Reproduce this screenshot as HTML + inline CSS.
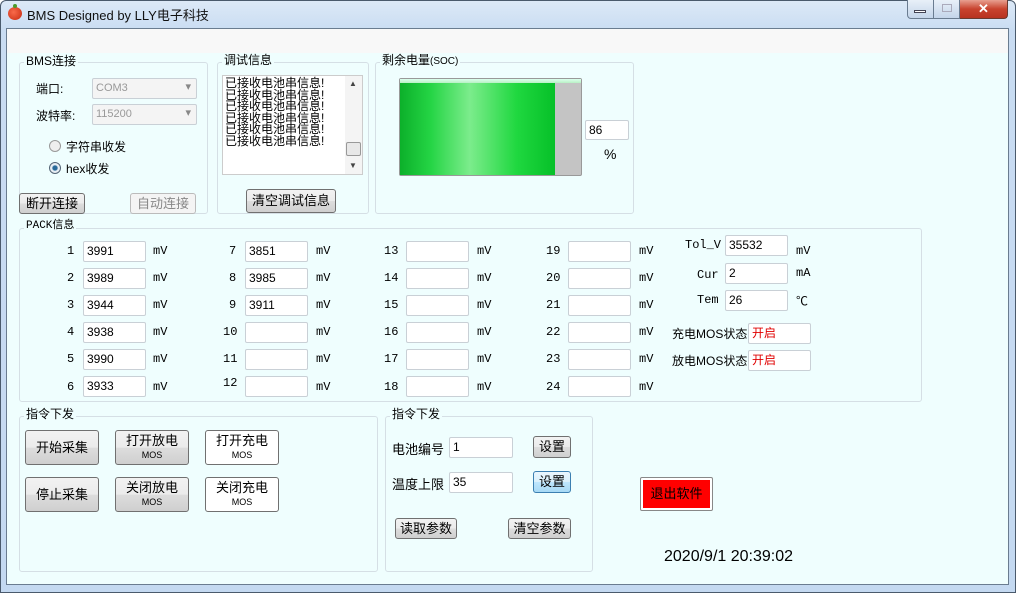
<!DOCTYPE html>
<html><head><meta charset="utf-8"><style>
*{margin:0;padding:0;box-sizing:border-box}
body{width:1018px;height:596px;overflow:hidden;background:#fff;font-family:"Liberation Sans","Noto Sans CJK SC",sans-serif;font-size:12px;color:#000;position:relative}
.a{position:absolute}
.frame{left:0;top:0;width:1016px;height:593px;background:linear-gradient(#dce9f7,#c9dcf2 30px,#c4d9f1);border:1px solid #4a5a6c;border-radius:6px 6px 0 0}
.client{left:6px;top:28px;width:1003px;height:557px;background:#effefe;border:1px solid #6a7c90}
.strip{left:7px;top:29px;width:1001px;height:24px;background:#f8f8f8}
.gb{position:absolute;border:1px solid #d5dfe5;border-radius:3px}
.gl{position:absolute;background:#effefe;padding:0 2px;font-size:12px;line-height:13px}
.tb{position:absolute;background:#fff;border:1px solid #c9d0d6;border-radius:2px;font-size:12px;padding:1px 3px;line-height:17px;height:21px}
.btn{position:absolute;border:1px solid #707070;border-radius:3px;background:linear-gradient(#f2f2f2,#ebebeb 50%,#dddddd 51%,#cfcfcf);text-align:center;font-size:13px}
.wb{background:#fff}
.lbl{position:absolute;font-size:12px}
.mv{position:absolute;font-size:12px;font-family:"Liberation Mono","Noto Sans CJK SC",monospace}
</style></head><body>
<div class="a frame"></div>
<div class="a" style="left:8px;top:7px;width:14px;height:13px;border-radius:50%;background:radial-gradient(circle at 40% 40%,#f86a4a,#c82a10)"></div>
<div class="a" style="left:13px;top:4px;width:4px;height:4px;background:#4a9a2a;border-radius:2px"></div>
<div class="a" style="left:27px;top:5px;font-size:13px;color:#111">BMS Designed by LLY电子科技</div>
<div class="a" style="left:907px;top:0;width:27px;height:19px;border:1px solid #6a7c90;border-top:0;border-radius:0 0 0 4px;background:linear-gradient(#e8f0f8,#c4d5ea)"></div>
<div class="a" style="left:914px;top:10px;width:12px;height:3px;background:#fff;border:1px solid #445"></div>
<div class="a" style="left:934px;top:0;width:26px;height:19px;border:1px solid #6a7c90;border-top:0;border-left:0;background:linear-gradient(#e8f0f8,#c4d5ea)"></div>
<div class="a" style="left:942px;top:4px;width:10px;height:8px;border:1px solid #aab"></div>
<div class="a" style="left:960px;top:0;width:48px;height:19px;border:1px solid #6a3a30;border-top:0;border-left:0;border-radius:0 0 4px 0;background:linear-gradient(#e8a090,#c8432e 50%,#b83220);color:#fff;font-weight:bold;text-align:center;font-size:13px;line-height:17px">✕</div>
<div class="a client"></div>
<div class="a strip"></div>

<div class="gb" style="left:19px;top:62px;width:189px;height:152px"></div>
<div class="gl" style="left:24px;top:55px">BMS连接</div>
<div class="lbl" style="left:36px;top:80px">端口:</div>
<div class="lbl" style="left:36px;top:107px">波特率:</div>
<div class="tb" style="left:92px;top:78px;width:105px;background:#f4f4f4;color:#999;font-size:11px">COM3<span style="position:absolute;right:5px;top:0;color:#888">▾</span></div>
<div class="tb" style="left:92px;top:104px;width:105px;background:#f4f4f4;color:#999;font-size:11px">115200<span style="position:absolute;right:5px;top:0;color:#888">▾</span></div>
<div class="a" style="left:49px;top:140px;width:12px;height:12px;border-radius:50%;border:1px solid #999;background:#eee"></div>
<div class="lbl" style="left:66px;top:138px">字符串收发</div>
<div class="a" style="left:49px;top:162px;width:12px;height:12px;border-radius:50%;border:1px solid #567;background:radial-gradient(#2a6a9a 30%,#e8eef4 45%)"></div>
<div class="lbl" style="left:66px;top:160px">hex收发</div>
<div class="btn" style="left:19px;top:193px;width:66px;height:21px;line-height:19px">断开连接</div>
<div class="btn" style="left:130px;top:193px;width:66px;height:21px;line-height:19px;color:#888;border-color:#bbb;background:#f4f4f4">自动连接</div>

<div class="gb" style="left:217px;top:62px;width:152px;height:152px"></div>
<div class="gl" style="left:222px;top:54px">调试信息</div>
<div class="a" style="left:222px;top:75px;width:141px;height:100px;background:#fff;border:1px solid #ccc;font-size:12px;line-height:11.5px;padding:2px 2px">已接收电池串信息!<br>已接收电池串信息!<br>已接收电池串信息!<br>已接收电池串信息!<br>已接收电池串信息!<br>已接收电池串信息!</div>
<div class="a" style="left:345px;top:76px;width:17px;height:98px;background:#f4f4f4"></div>
<div class="a" style="left:349px;top:79px;font-size:8px;color:#444">▲</div>
<div class="a" style="left:349px;top:161px;font-size:8px;color:#444">▼</div>
<div class="a" style="left:346px;top:142px;width:15px;height:14px;border:1px solid #999;border-radius:2px;background:#e8e8e8"></div>
<div class="btn" style="left:246px;top:189px;width:90px;height:24px;line-height:22px">清空调试信息</div>

<div class="gb" style="left:375px;top:62px;width:259px;height:152px"></div>
<div class="gl" style="left:380px;top:54px">剩余电量<span style="font-size:10px">(SOC)</span></div>
<div class="a" style="left:399px;top:78px;width:183px;height:98px;border:1px solid #999;background:#c4c4c4;border-radius:2px"></div>
<div class="a" style="left:400px;top:79px;width:155px;height:96px;background:linear-gradient(90deg,#0cb02a,#25d545 20%,#7cec8c 45%,#20d840 75%,#06c028)"></div>
<div class="a" style="left:400px;top:79px;width:181px;height:4px;background:linear-gradient(#dfe,#b8f0c4)"></div>
<div class="tb" style="left:585px;top:120px;width:44px;height:20px">86</div>
<div class="lbl" style="left:604px;top:146px;font-size:14px">%</div>

<div class="gb" style="left:19px;top:228px;width:903px;height:174px"></div>
<div class="gl" style="left:24px;top:220px;font-family:'Liberation Mono','Noto Sans CJK SC',monospace;font-size:11px">PACK信息</div>

<div class="mv" style="left:67px;top:244px">1</div><div class="tb" style="left:83px;top:241px;width:63px">3991</div><div class="mv" style="left:153px;top:244px">mV</div>
<div class="mv" style="left:67px;top:271px">2</div><div class="tb" style="left:83px;top:268px;width:63px">3989</div><div class="mv" style="left:153px;top:271px">mV</div>
<div class="mv" style="left:67px;top:298px">3</div><div class="tb" style="left:83px;top:295px;width:63px">3944</div><div class="mv" style="left:153px;top:298px">mV</div>
<div class="mv" style="left:67px;top:325px">4</div><div class="tb" style="left:83px;top:322px;width:63px">3938</div><div class="mv" style="left:153px;top:325px">mV</div>
<div class="mv" style="left:67px;top:352px">5</div><div class="tb" style="left:83px;top:349px;width:63px">3990</div><div class="mv" style="left:153px;top:352px">mV</div>
<div class="mv" style="left:67px;top:380px">6</div><div class="tb" style="left:83px;top:376px;width:63px">3933</div><div class="mv" style="left:153px;top:380px">mV</div>

<div class="mv" style="left:229px;top:244px">7</div><div class="tb" style="left:245px;top:241px;width:63px">3851</div><div class="mv" style="left:316px;top:244px">mV</div>
<div class="mv" style="left:229px;top:271px">8</div><div class="tb" style="left:245px;top:268px;width:63px">3985</div><div class="mv" style="left:316px;top:271px">mV</div>
<div class="mv" style="left:229px;top:298px">9</div><div class="tb" style="left:245px;top:295px;width:63px">3911</div><div class="mv" style="left:316px;top:298px">mV</div>
<div class="mv" style="left:223px;top:325px">10</div><div class="tb" style="left:245px;top:322px;width:63px"></div><div class="mv" style="left:316px;top:325px">mV</div>
<div class="mv" style="left:223px;top:352px">11</div><div class="tb" style="left:245px;top:349px;width:63px"></div><div class="mv" style="left:316px;top:352px">mV</div>
<div class="mv" style="left:223px;top:376px">12</div><div class="tb" style="left:245px;top:376px;width:63px"></div><div class="mv" style="left:316px;top:380px">mV</div>

<div class="mv" style="left:384px;top:244px">13</div><div class="tb" style="left:406px;top:241px;width:63px"></div><div class="mv" style="left:477px;top:244px">mV</div>
<div class="mv" style="left:384px;top:271px">14</div><div class="tb" style="left:406px;top:268px;width:63px"></div><div class="mv" style="left:477px;top:271px">mV</div>
<div class="mv" style="left:384px;top:298px">15</div><div class="tb" style="left:406px;top:295px;width:63px"></div><div class="mv" style="left:477px;top:298px">mV</div>
<div class="mv" style="left:384px;top:325px">16</div><div class="tb" style="left:406px;top:322px;width:63px"></div><div class="mv" style="left:477px;top:325px">mV</div>
<div class="mv" style="left:384px;top:352px">17</div><div class="tb" style="left:406px;top:349px;width:63px"></div><div class="mv" style="left:477px;top:352px">mV</div>
<div class="mv" style="left:384px;top:380px">18</div><div class="tb" style="left:406px;top:376px;width:63px"></div><div class="mv" style="left:477px;top:380px">mV</div>

<div class="mv" style="left:546px;top:244px">19</div><div class="tb" style="left:568px;top:241px;width:63px"></div><div class="mv" style="left:639px;top:244px">mV</div>
<div class="mv" style="left:546px;top:271px">20</div><div class="tb" style="left:568px;top:268px;width:63px"></div><div class="mv" style="left:639px;top:271px">mV</div>
<div class="mv" style="left:546px;top:298px">21</div><div class="tb" style="left:568px;top:295px;width:63px"></div><div class="mv" style="left:639px;top:298px">mV</div>
<div class="mv" style="left:546px;top:325px">22</div><div class="tb" style="left:568px;top:322px;width:63px"></div><div class="mv" style="left:639px;top:325px">mV</div>
<div class="mv" style="left:546px;top:352px">23</div><div class="tb" style="left:568px;top:349px;width:63px"></div><div class="mv" style="left:639px;top:352px">mV</div>
<div class="mv" style="left:546px;top:380px">24</div><div class="tb" style="left:568px;top:376px;width:63px"></div><div class="mv" style="left:639px;top:380px">mV</div>

<div class="mv" style="left:685px;top:238px">Tol_V</div><div class="tb" style="left:725px;top:235px;width:63px">35532</div><div class="mv" style="left:796px;top:244px">mV</div>
<div class="mv" style="left:697px;top:268px">Cur</div><div class="tb" style="left:725px;top:263px;width:63px">2</div><div class="mv" style="left:796px;top:266px">mA</div>
<div class="mv" style="left:697px;top:293px">Tem</div><div class="tb" style="left:725px;top:290px;width:63px">26</div><div class="mv" style="left:796px;top:292px">℃</div>
<div class="lbl" style="left:672px;top:325px">充电MOS状态</div><div class="tb" style="left:748px;top:323px;width:63px;color:#e00000">开启</div>
<div class="lbl" style="left:672px;top:352px">放电MOS状态</div><div class="tb" style="left:748px;top:350px;width:63px;color:#e00000">开启</div>

<div class="gb" style="left:19px;top:416px;width:359px;height:156px"></div>
<div class="gl" style="left:24px;top:408px">指令下发</div>
<div class="btn" style="left:25px;top:430px;width:74px;height:35px;line-height:33px">开始采集</div>
<div class="btn" style="left:115px;top:430px;width:74px;height:35px;line-height:13px;padding-top:3px">打开放电<br><span style="font-size:9px">MOS</span></div>
<div class="btn wb" style="left:205px;top:430px;width:74px;height:35px;line-height:13px;padding-top:3px">打开充电<br><span style="font-size:9px">MOS</span></div>
<div class="btn" style="left:25px;top:477px;width:74px;height:35px;line-height:33px">停止采集</div>
<div class="btn" style="left:115px;top:477px;width:74px;height:35px;line-height:13px;padding-top:3px">关闭放电<br><span style="font-size:9px">MOS</span></div>
<div class="btn wb" style="left:205px;top:477px;width:74px;height:35px;line-height:13px;padding-top:3px">关闭充电<br><span style="font-size:9px">MOS</span></div>

<div class="gb" style="left:385px;top:416px;width:208px;height:156px"></div>
<div class="gl" style="left:390px;top:408px">指令下发</div>
<div class="lbl" style="left:392px;top:439px;font-size:13px">电池编号</div>
<div class="tb" style="left:449px;top:437px;width:64px">1</div>
<div class="btn" style="left:533px;top:436px;width:38px;height:22px;line-height:20px">设置</div>
<div class="lbl" style="left:392px;top:474px;font-size:13px">温度上限</div>
<div class="tb" style="left:449px;top:472px;width:64px">35</div>
<div class="btn" style="left:533px;top:471px;width:38px;height:22px;line-height:20px;border-color:#3c7fb1;background:linear-gradient(#eaf6fd,#d9f0fc 50%,#bee6fd 51%,#a7d9f5)">设置</div>
<div class="btn" style="left:395px;top:518px;width:62px;height:21px;line-height:19px">读取参数</div>
<div class="btn" style="left:508px;top:518px;width:63px;height:21px;line-height:19px">清空参数</div>

<div class="a" style="left:640px;top:477px;width:73px;height:34px;border:1px solid #888;border-radius:2px;background:#fff;padding:2px"><div style="width:100%;height:100%;background:#ff0000;text-align:center;line-height:28px;font-size:13px">退出软件</div></div>
<div class="a" style="left:664px;top:548px;font-size:16px">2020/9/1 20:39:02</div>
</body></html>
